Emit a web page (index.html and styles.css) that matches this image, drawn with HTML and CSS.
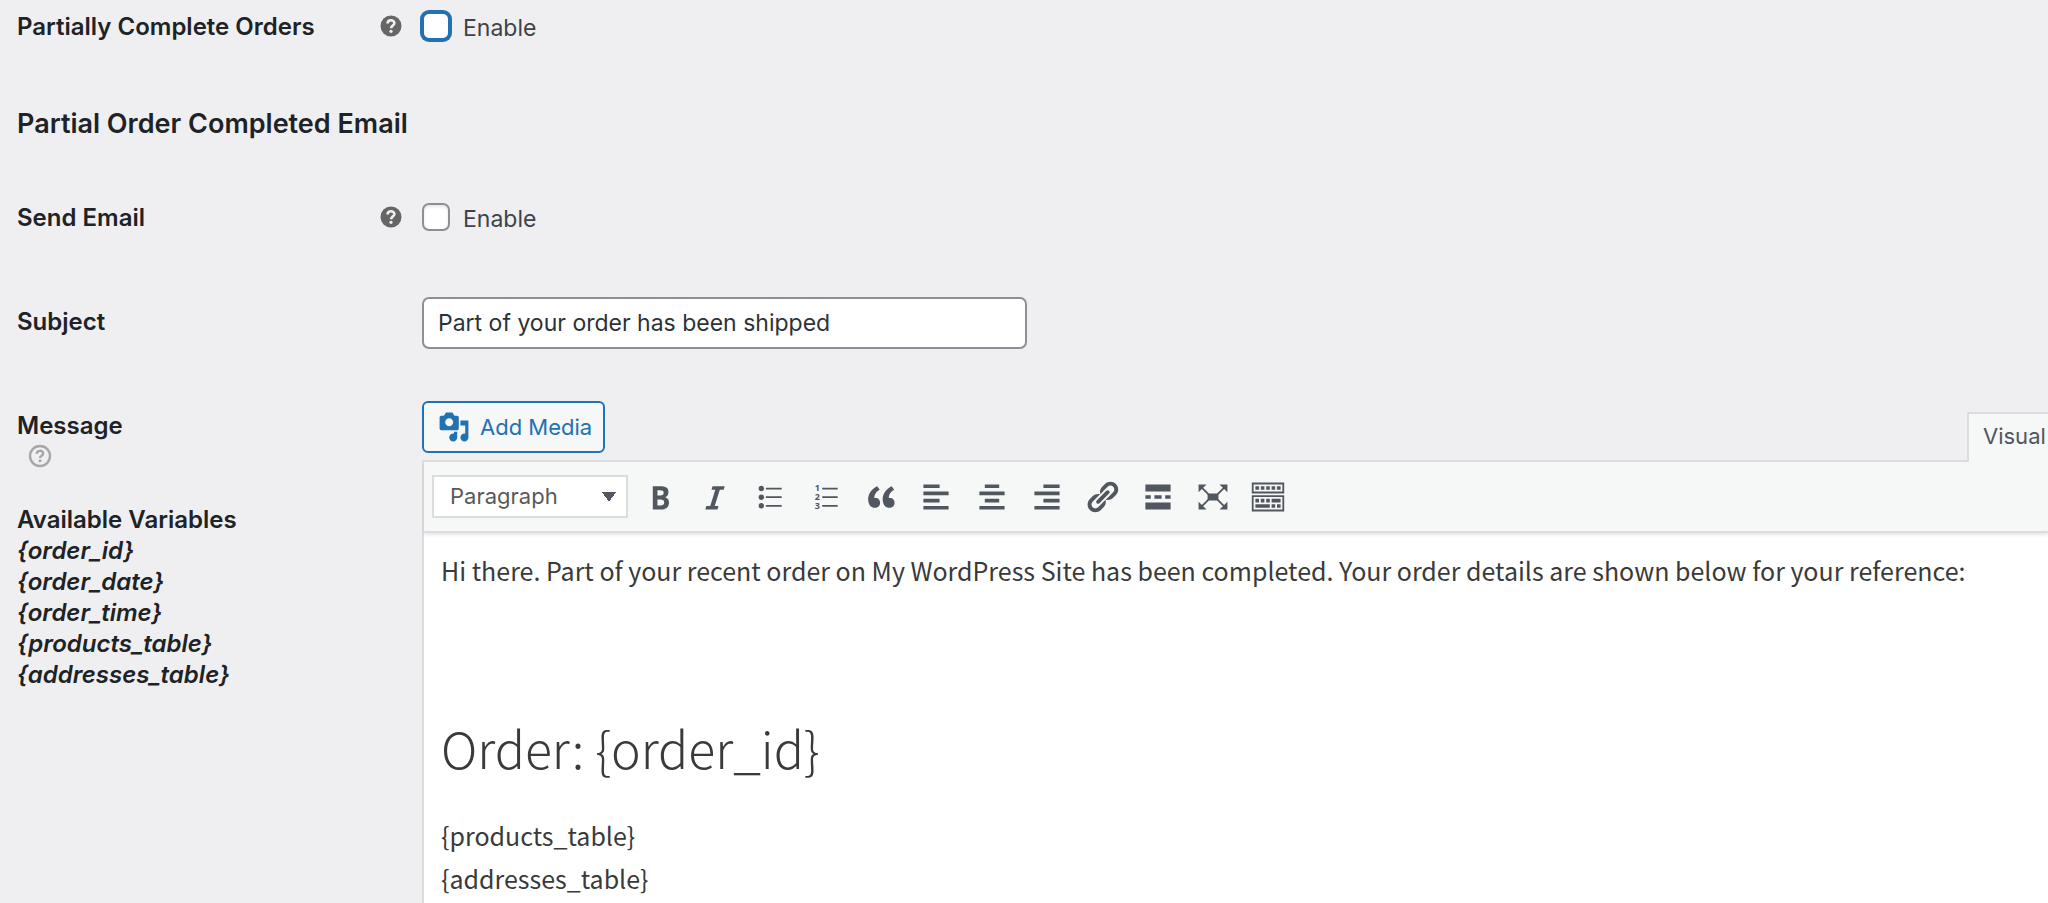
FILE: index.html
```
<!DOCTYPE html>
<html lang="en">
<head>
    <meta charset="UTF-8">
    <meta name="viewport" content="width=device-width, initial-scale=1">
    <title>Partial Orders</title>
    <link rel="stylesheet" href="styles.css">
</head>
<body>
<form class="settings">
    <div class="row row-orders">
        <div class="label">
            <label for="partial">Partially Complete Orders</label>
            <svg class="tip" viewBox="0 0 22 22"><circle cx="11" cy="11" r="10.5" fill="#666"/><path d="M7.600 8.600c0-4.400 6.800-4.200 6.800-.5 0 2.500-3.300 2.500-3.300 5.200" fill="none" stroke="#f0f0f1" stroke-width="2.600"/><circle cx="11" cy="16.300" r="1.600" fill="#f0f0f1"/></svg>
        </div>
        <div class="field check">
            <input type="checkbox" id="partial" class="focused">
            <label for="partial">Enable</label>
        </div>
    </div>

    <h2>Partial Order Completed Email</h2>

    <div class="row row-send">
        <div class="label">
            <label for="send">Send Email</label>
            <svg class="tip" viewBox="0 0 22 22"><circle cx="11" cy="11" r="10.5" fill="#666"/><path d="M7.600 8.600c0-4.400 6.800-4.200 6.800-.5 0 2.500-3.300 2.500-3.300 5.200" fill="none" stroke="#f0f0f1" stroke-width="2.600"/><circle cx="11" cy="16.300" r="1.600" fill="#f0f0f1"/></svg>
        </div>
        <div class="field check">
            <input type="checkbox" id="send">
            <label for="send">Enable</label>
        </div>
    </div>

    <div class="row row-subject">
        <div class="label">
            <label for="subject">Subject</label>
        </div>
        <div class="field">
            <input type="text" id="subject" value="Part of your order has been shipped">
        </div>
    </div>

    <div class="row row-message">
        <div class="message-label">
            <p>Message</p>
            <svg class="help" viewBox="0 0 24 24"><circle cx="12" cy="12" r="10" fill="none" stroke="#a7a7a8" stroke-width="2.400"/><path d="M8.800 9.800c0-4 6.400-3.800 6.400-.4 0 2.300-3.200 2.200-3.200 4.600" fill="none" stroke="#a7a7a8" stroke-width="2.400"/><circle cx="12" cy="16.800" r="1.500" fill="#a7a7a8"/></svg>
            <p class="vars">Available Variables<br>
                <em>{order_id}<br>
                {order_date}<br>
                {order_time}<br>
                {products_table}<br>
                {addresses_table}</em>
            </p>
        </div>
        <div class="field">
            <div class="editor-tools">
                <button type="button" class="add-media">
                    <svg viewBox="0 0 20 20"><path d="M13 11V4c0-.55-.45-1-1-1h-1.67L9 1H5L3.67 3H2c-.55 0-1 .45-1 1v7c0 .55.45 1 1 1h10c.55 0 1-.45 1-1zM7 4.500c1.380 0 2.500 1.120 2.500 2.500S8.380 9.500 7 9.500 4.500 8.380 4.500 7 5.620 4.500 7 4.500zM14 6h5v10.500c0 1.380-1.120 2.500-2.500 2.500S14 17.880 14 16.500s1.120-2.500 2.500-2.500c.17 0 .34.02.5.05V9h-3V6zm-4 8.050V13h2v3.500c0 1.380-1.120 2.500-2.500 2.500S7 17.880 7 16.500 8.120 14 9.500 14c.17 0 .34.02.5.05z"/></svg>
                    Add Media
                </button>
                <button type="button" class="tab">Visual</button>
            </div>
            <div class="editor">
                <div class="toolbar">
                    <select aria-label="Format">
                        <option>Paragraph</option>
                    </select>
                    <div class="buttons">
                        <button type="button" aria-label="Bold"><svg viewBox="0 0 20 20"><path d="M6 4v13h4.540c1.370 0 2.460-.33 3.260-1 .8-.66 1.200-1.580 1.200-2.770 0-.84-.17-1.510-.51-2.010s-.9-.85-1.670-1.030v-.09c.57-.1 1.020-.4 1.360-.9s.51-1.130.51-1.910c0-1.140-.39-1.980-1.170-2.500C12.750 4.260 11.500 4 9.780 4H6zm2.570 5.150V6.260h1.360c.73 0 1.270.11 1.610.32.34.22.51.58.51 1.070 0 .54-.16.92-.47 1.150s-.82.35-1.510.35h-1.500zm0 2.190h1.600c1.440 0 2.160.53 2.160 1.610 0 .6-.17 1.050-.51 1.340s-.86.43-1.570.43H8.570v-3.380z"/></svg></button>
                        <button type="button" aria-label="Italic"><svg viewBox="0 0 20 20"><path d="M14.780 6h-2.130l-2.800 9h2.120l-.62 2H4.600l.62-2h2.140l2.800-9H8.030l.62-2h6.750z"/></svg></button>
                        <button type="button" aria-label="Bulleted list"><svg viewBox="0 0 20 20"><circle cx="5.200" cy="5.300" r="1.500"/><circle cx="5.200" cy="10.100" r="1.500"/><circle cx="5.200" cy="14.900" r="1.500"/><path d="M7.700 4.800h8.800v1H7.700zM7.700 9.600h8.800v1H7.700zM7.700 14.400h8.800v1H7.700z"/></svg></button>
                        <button type="button" aria-label="Numbered list"><svg viewBox="0 0 20 20"><text x="3.800" y="6.800">1</text><text x="3.800" y="11.800">2</text><text x="3.800" y="16.800">3</text><path d="M7.900 4.800h8.600v1H7.900zM7.900 9.600h8.600v1H7.900zM7.900 14.400h8.600v1H7.900z"/></svg></button>
                        <button type="button" aria-label="Blockquote"><svg viewBox="0 0 20 20"><path d="M9.490 13.220c0-.74-.2-1.380-.61-1.900-.62-.78-1.830-.88-2.530-.72-.29-1.650 1.110-3.750 2.920-4.650L7.880 4c-2.730 1.300-5.420 4.280-4.960 8.050C3.210 14.430 4.590 16 6.540 16c.85 0 1.560-.25 2.120-.75s.83-1.180.83-2.030zm8.050 0c0-.74-.2-1.380-.61-1.900-.63-.78-1.830-.88-2.530-.72-.29-1.650 1.110-3.750 2.920-4.650L15.930 4c-2.730 1.300-5.410 4.280-4.950 8.050.29 2.380 1.660 3.950 3.610 3.950.85 0 1.560-.25 2.120-.75s.83-1.180.83-2.030z"/></svg></button>
                        <button type="button" aria-label="Align left"><svg viewBox="0 0 20 20"><path d="M12 5V3H3v2h9zm5 4V7H3v2h14zm-5 4v-2H3v2h9zm5 4v-2H3v2h14z"/></svg></button>
                        <button type="button" aria-label="Align center"><svg viewBox="0 0 20 20"><path d="M14 5V3H6v2h8zm3 4V7H3v2h14zm-3 4v-2H6v2h8zm3 4v-2H3v2h14z"/></svg></button>
                        <button type="button" aria-label="Align right"><svg viewBox="0 0 20 20"><path d="M17 5V3H8v2h9zm0 4V7H3v2h14zm0 4v-2H8v2h9zm0 4v-2H3v2h14z"/></svg></button>
                        <button type="button" aria-label="Insert link"><svg viewBox="0 0 20 20"><path d="M17.740 2.760c1.680 1.690 1.680 4.410 0 6.100l-1.530 1.520c-1.120 1.120-2.700 1.470-4.140 1.090l2.620-2.610.76-.77.76-.76c.84-.84.84-2.200 0-3.040-.84-.85-2.200-.85-3.040 0l-.77.76-3.380 3.380c-.37-1.440-.02-3.020 1.100-4.140l1.520-1.530c1.690-1.680 4.420-1.680 6.100 0zM8.590 13.430l5.340-5.340c.42-.42.42-1.100 0-1.520-.44-.43-1.130-.39-1.530 0l-5.330 5.340c-.42.42-.42 1.100 0 1.520.44.43 1.130.39 1.520 0zm-.76 2.290l4.140-4.150c.38 1.440.03 3.020-1.090 4.140l-1.520 1.530c-1.690 1.680-4.410 1.680-6.100 0-1.680-1.680-1.680-4.420 0-6.100l1.530-1.520c1.120-1.120 2.700-1.470 4.140-1.100l-4.140 4.150c-.85.84-.85 2.200 0 3.050.84.84 2.200.84 3.040 0z"/></svg></button>
                        <button type="button" aria-label="Read more"><svg viewBox="0 0 20 20"><path d="M17 7V3H3v4h14zM6 11V9H3v2h3zm6 0V9H8v2h4zm5 0V9h-3v2h3zm0 6v-4H3v4h14z"/></svg></button>
                        <button type="button" aria-label="Fullscreen"><svg viewBox="0 0 20 20"><path d="M7 8h6v4H7zM2 3h4.400L2 7.400zM18 3v4.400L13.600 3zM2 17v-4.400L6.400 17zM18 17h-4.400l4.400-4.400z"/><path d="M3.500 4.500l4 4M16.500 4.500l-4 4M3.500 15.500l4-4M16.500 15.500l-4-4" fill="none" stroke="#50575e" stroke-width="1"/></svg></button>
                        <button type="button" aria-label="Toolbar toggle"><svg viewBox="0 0 20 20"><path fill-rule="evenodd" d="M1 2h18v6H1zM2 3v4h16V3zM1 9h18v9H1zM2 10v7h16v-7z"/><path d="M3 4h2v2H3zM6 4h2v2H6zM9 4h2v2H9zM12 4h2v2h-2zM15 4h2v2h-2zM3 11h2v2H3zM6 11h2v2H6zM9 11h2v2H9zM12 11h5v2h-5zM3 14h8v2H3zM12 14h2v2h-2zM15 14h2v2h-2z"/></svg></button>
                    </div>
                </div>
                <div class="content">
                    <p>Hi there. Part of your recent order on My WordPress Site has been completed. Your order details are shown below for your reference:</p>
                    <h1>Order: {order_id}</h1>
                    <p>{products_table}<br>{addresses_table}</p>
                </div>
            </div>
        </div>
    </div>
</form>
</body>
</html>
```
FILE: styles.css
```
*{
    box-sizing: border-box;
    margin: 0;
    padding: 0;
}
body{
    background-color: #efeff1;
    color: #3c434a;
    font-family: Inter, "Liberation Sans", sans-serif;
    font-size: 23px;
    line-height: 31px;
    overflow: hidden;
}
.row{
    display: grid;
    grid-template-columns: 405px minmax(0, 1fr);
    padding-left: 17px;
}
.row-orders{
    padding-top: 10px;
}
.row-send{
    padding-top: 61px;
}
.row-subject{
    padding-top: 64px;
}
.row-message{
    padding-top: 52px;
}
.label{
    display: flex;
    align-items: center;
    justify-content: space-between;
    height: 32px;
    padding-right: 20px;
    color: #1d2327;
    font-size: 24px;
    font-weight: 600;
}
.row-subject .label{
    height: 48px;
}
.tip{
    width: 22px;
    height: 22px;
}
h2{
    padding: 66px 0 0 17px;
    color: #1d2327;
    font-size: 27px;
    font-weight: 600;
    line-height: 32px;
}
.check{
    display: flex;
    align-items: center;
    gap: 13px;
    height: 32px;
}
.check label{
    padding-top: 4px;
}
input[type=checkbox]{
    appearance: none;
    width: 28px;
    height: 28px;
    border: 2px solid #8c8f94;
    border-radius: 7px;
    background-color: #fff;
    box-shadow: inset 0 2px 3px rgba(0, 0, 0, 0.1);
}
input[type=checkbox].focused{
    border: 2px solid #2271b1;
    box-shadow: 0 0 0 2px #2271b1;
}
input[type=text]{
    width: 605px;
    height: 52px;
    padding: 0 14px;
    border: 2px solid #8c8f94;
    border-radius: 7px;
    background-color: #fff;
    color: #2c3338;
    font: inherit;
}
.message-label{
    padding-top: 9px;
    color: #1d2327;
    font-size: 24px;
    font-weight: 600;
}
.help{
    display: block;
    width: 24px;
    height: 24px;
    margin: 3px 0 0 11px;
}
.vars{
    padding-top: 36px;
}
.editor-tools{
    display: flex;
    align-items: flex-start;
    justify-content: space-between;
    height: 59px;
}
.add-media{
    display: flex;
    align-items: center;
    gap: 10px;
    width: 183px;
    height: 52px;
    padding-left: 14px;
    border: 2px solid #2271b1;
    border-radius: 6px;
    background-color: #f6f7f7;
    color: #2271b1;
    font: inherit;
    font-size: 22px;
    white-space: nowrap;
}
.add-media svg{
    flex: none;
    width: 32px;
    height: 32px;
    fill: #2271b1;
}
/* the tab overlaps the top border of the editor */
.tab{
    position: relative;
    width: 81px;
    height: 50px;
    margin-top: 11px;
    padding: 0 0 4px 14px;
    border: 2px solid #dcdcde;
    border-width: 2px 0 0 2px;
    background-color: #f6f7f7;
    color: #50575e;
    font: inherit;
    font-size: 22px;
    text-align: left;
}
.editor{
    border: 2px solid #dcdcde;
    border-right: 0;
    background-color: #fff;
}
.toolbar{
    display: flex;
    align-items: center;
    height: 71px;
    padding-left: 8px;
    border-bottom: 2px solid #dcdcde;
    background-color: #f6f7f7;
    box-shadow: 0 2px 3px rgba(0, 0, 0, 0.1);
}
select{
    appearance: none;
    width: 196px;
    height: 43px;
    padding: 0 16px;
    border: 2px solid #dcdcde;
    background: #fff conic-gradient(from -35deg at 50% 100%, #50575e 70deg, transparent 0) right 10px center / 14px 10px no-repeat;
    color: #595959;
    font: inherit;
    font-size: 22px;
}
.buttons{
    display: flex;
    width: 664px;
    margin-left: 4px;
}
.buttons button{
    flex: 1;
    height: 36px;
    border: 0;
    background: none;
}
.buttons svg{
    display: block;
    width: 36px;
    height: 36px;
    margin: 0 auto;
    fill: #50575e;
}
.buttons text{
    font-family: "Open Sans", sans-serif;
    font-size: 5px;
    font-weight: 700;
}
.content{
    padding: 16px 17px;
    color: #3a3a3a;
    font-family: "Noto Sans CJK SC", sans-serif;
    font-size: 25px;
    line-height: 43px;
}
.content h1{
    padding: 120px 0 32px;
    font-size: 50px;
    font-weight: 300;
    line-height: 70px;
}
```
